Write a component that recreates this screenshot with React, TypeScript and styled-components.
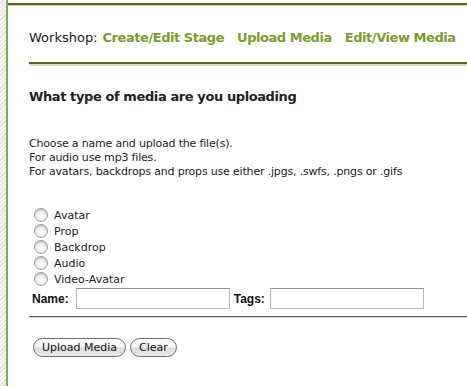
import styled, { createGlobalStyle } from 'styled-components'

const GlobalStyle = createGlobalStyle`
  html, body {
    margin: 0;
    padding: 0;
    background: #ffffff;
  }
  body {
    font-family: 'DejaVu Sans', Verdana, sans-serif;
    color: #222222;
  }
`

const Page = styled.div`
  display: flex;
  width: 467px;
  height: 386px;
  overflow: hidden;
`

const Gutter = styled.div`
  width: 6px;
  flex: none;
  background: repeating-linear-gradient(
    135deg,
    #f4f4f4 0px,
    #f4f4f4 2px,
    #dedede 2px,
    #dedede 3px
  );
  border-right: 2px solid #87a94a;
`

const Main = styled.div`
  flex: 1;
  padding-top: 3px;
  min-width: 0;
`

const TopRule = styled.div`
  height: 2px;
  background: #4d6b1c;
  border-bottom: 1px solid #c9dba6;
`

const Content = styled.div`
  padding-left: 21px;
`

const Nav = styled.div`
  display: flex;
  align-items: baseline;
  gap: 13px;
  padding-top: 24px;
  height: 32px;
  font-size: 13px;
  white-space: nowrap;
`

const NavLabel = styled.span`
  color: #1a1a1a;
  margin-right: -8px;
`

const NavLink = styled.a`
  color: #7b9c2e;
  font-weight: bold;
  letter-spacing: -0.45px;
  text-decoration: none;
`

const SectionRule = styled.div`
  height: 2px;
  background: #4d6b1c;
  border-bottom: 2px solid #d4e4b6;
`

const Heading = styled.h2`
  margin: 23px 0 0;
  font-size: 13px;
  font-weight: bold;
  letter-spacing: -0.4px;
  color: #222222;
`

const Intro = styled.p`
  margin: 33px 0 0;
  font-size: 11px;
  line-height: 14px;
  letter-spacing: -0.18px;
  color: #222222;
`

const Options = styled.div`
  display: flex;
  flex-direction: column;
  margin-top: 28px;
  padding-left: 5px;
`

const Option = styled.label`
  display: flex;
  align-items: center;
  gap: 6px;
  height: 16px;
  font-size: 11px;
  color: #222222;
`

const Radio = styled.span`
  width: 12px;
  height: 12px;
  border-radius: 50%;
  border: 1px solid #9a9a9a;
  background: radial-gradient(circle at 50% 65%, #ffffff 0%, #f0f0f0 45%, #cfcfcf 100%);
  box-shadow: inset 0 1px 1px rgba(0, 0, 0, 0.12);
`

const FieldRow = styled.div`
  display: flex;
  align-items: center;
  gap: 4px;
  margin-top: 1px;
  padding-left: 3px;
  font-weight: bold;
  font-family: 'Liberation Sans', Arial, sans-serif;
  font-size: 12px;
`

const FieldLabel = styled.span<{ $space: number }>`
  color: #111111;
  margin-right: ${({ $space }) => $space}px;
`

const TextInput = styled.input`
  width: 150px;
  height: 17px;
  box-sizing: content-box;
  padding: 1px;
  border: 1px solid #b8b8b8;
  border-top-color: #8e8e8e;
  margin: 0;
  background: #ffffff;
`

const Divider = styled.div`
  margin-top: 7px;
  height: 1px;
  background: #5a5a5a;
  border-bottom: 1px solid #d8d8d8;
`

const Buttons = styled.div`
  display: flex;
  gap: 4px;
  margin-top: 20px;
  padding-left: 4px;
`

const Button = styled.button`
  height: 19px;
  padding: 0 8px;
  border-radius: 10px;
  border: 1px solid #6f6f6f;
  background: linear-gradient(#ffffff 0%, #f4f4f4 45%, #dcdcdc 55%, #ececec 100%);
  font-family: 'DejaVu Sans', Verdana, sans-serif;
  font-size: 11px;
  color: #111111;
  line-height: 17px;
`

const mediaTypes = ['Avatar', 'Prop', 'Backdrop', 'Audio', 'Video-Avatar']

export default function App() {
  return (
    <>
      <GlobalStyle />
      <Page>
        <Gutter />
        <Main>
          <TopRule />
          <Content>
            <Nav>
              <NavLabel>Workshop:</NavLabel>
              <NavLink>Create/Edit Stage</NavLink>
              <NavLink>Upload Media</NavLink>
              <NavLink>Edit/View Media</NavLink>
            </Nav>
            <SectionRule />
            <Heading>What type of media are you uploading</Heading>
            <Intro>
              Choose a name and upload the file(s).
              <br />
              For audio use mp3 files.
              <br />
              For avatars, backdrops and props use either .jpgs, .swfs, .pngs or .gifs
            </Intro>
            <Options>
              {mediaTypes.map((t) => (
                <Option key={t}>
                  <Radio />
                  {t}
                </Option>
              ))}
            </Options>
            <FieldRow>
              <FieldLabel $space={3}>Name:</FieldLabel>
              <TextInput type="text" />
              <FieldLabel $space={1}>Tags:</FieldLabel>
              <TextInput type="text" />
            </FieldRow>
            <Divider />
            <Buttons>
              <Button>Upload Media</Button>
              <Button>Clear</Button>
            </Buttons>
          </Content>
        </Main>
      </Page>
    </>
  )
}
